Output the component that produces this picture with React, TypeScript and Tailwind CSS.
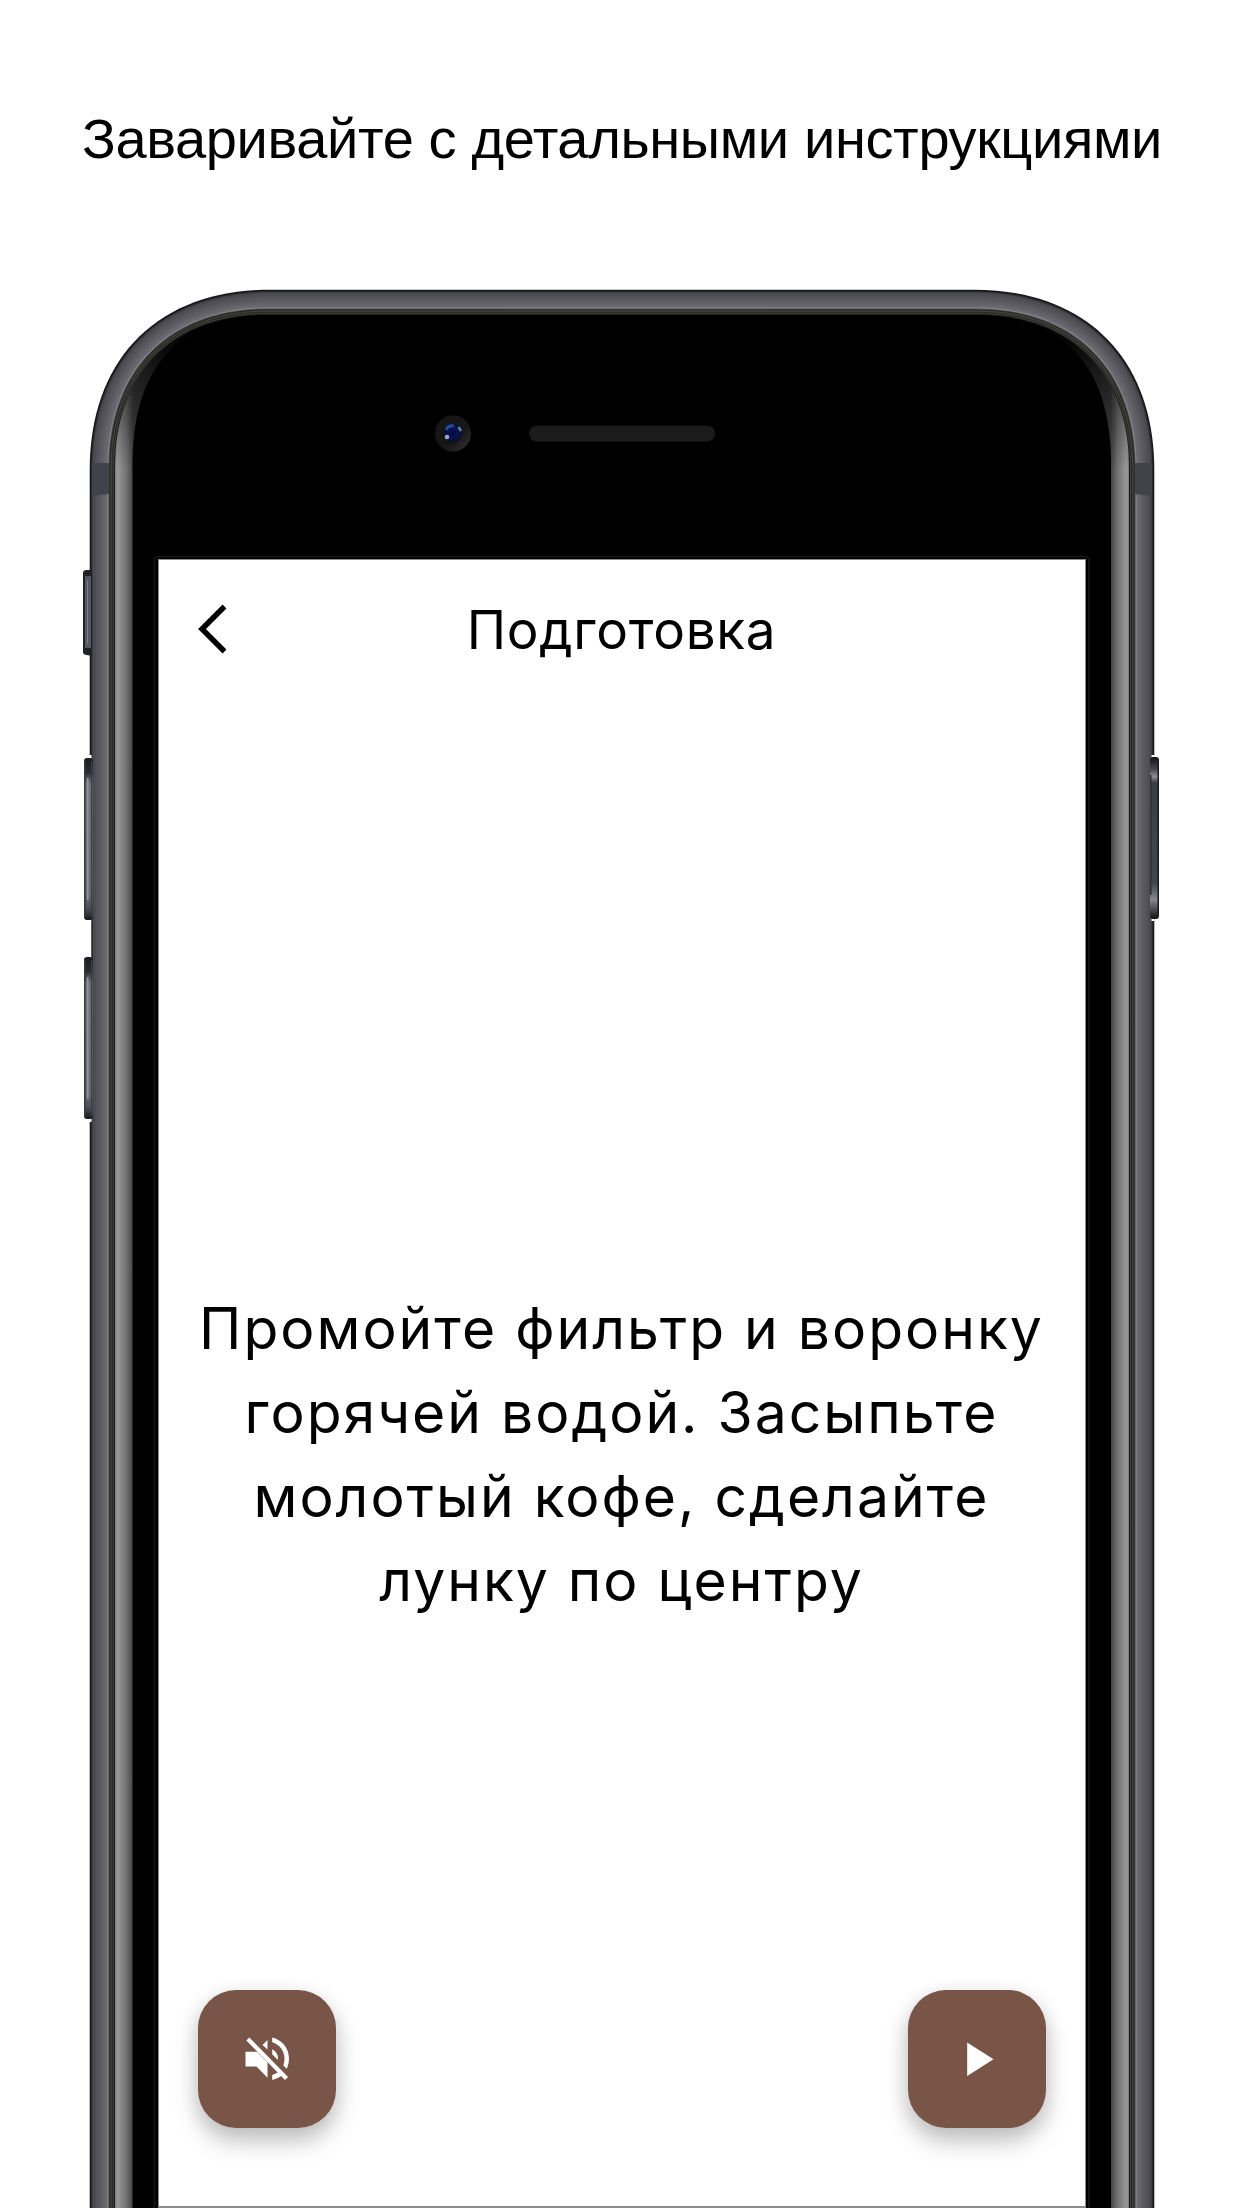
const ramp = (n: number, a: number[], b: number[]) =>
  Array.from({ length: n }, (_, i) => {
    const t = i / (n - 1);
    return `rgb(${a.map((v, j) => Math.round(v + (b[j] - v) * t)).join(",")})`;
  });

/* Rounded, open-bottomed phone outline inset from the body edge. */
function shell(inset: number) {
  const l = 90 + inset;
  const r = 1154 - inset;
  const t = 290 + inset;
  const R = 180 - inset * 1.1;
  const h = R * 0.38;
  return `M${l} 2210V${t + R}C${l} ${t + h} ${l + h} ${t} ${l + R} ${t}H${r - R}C${r - h} ${t} ${r} ${t + h} ${r} ${t + R}V2210Z`;
}

const layers: [number, string][] = [
  [-0.3, "#17191b"],
  [1.4, "#35363b"],
  ...ramp(9, [73, 73, 78], [108, 107, 114]).map((c, i): [number, string] => [2.6 + i * 1.7, c]),
  [17.4, "#85858b"],
  [18.4, "#55565a"],
  [19.2, "#292a26"],
  [20.6, "#43443c"],
  [21.8, "#292a24"],
  [23, "#3f4039"],
  [24, "#1b1b1b"],
];

function Phone() {
  return (
    <svg className="absolute inset-0" width="1242" height="2208" viewBox="0 0 1242 2208" aria-hidden="true">
      <defs>
        <linearGradient id="glass" gradientUnits="userSpaceOnUse" x1="115" x2="1129" y1="0" y2="0">
          <stop offset="0" stopColor="#777" />
          <stop offset=".002" stopColor="#9b9b9b" />
          <stop offset=".011" stopColor="#747474" />
          <stop offset=".018" stopColor="#414141" />
          <stop offset=".06" stopColor="#222" />
          <stop offset=".94" stopColor="#222" />
          <stop offset=".982" stopColor="#414141" />
          <stop offset=".989" stopColor="#747474" />
          <stop offset=".998" stopColor="#9b9b9b" />
          <stop offset="1" stopColor="#777" />
        </linearGradient>
        <linearGradient id="fade" gradientUnits="userSpaceOnUse" x1="0" x2="0" y1="325" y2="470">
          <stop offset="0" stopColor="#000" />
          <stop offset=".3" stopColor="#000" stopOpacity=".55" />
          <stop offset="1" stopColor="#000" stopOpacity="0" />
        </linearGradient>
        <linearGradient id="btn" x1="0" x2="0" y1="0" y2="1">
          <stop offset="0" stopColor="#1b1c21" />
          <stop offset=".09" stopColor="#2b2d33" />
          <stop offset=".16" stopColor="#70737b" />
          <stop offset=".84" stopColor="#686b73" />
          <stop offset=".93" stopColor="#4a4d54" />
          <stop offset="1" stopColor="#15171a" />
        </linearGradient>
        <linearGradient id="btnR" x1="0" x2="0" y1="0" y2="1">
          <stop offset="0" stopColor="#111216" />
          <stop offset=".08" stopColor="#4a4c52" />
          <stop offset=".12" stopColor="#8b8d94" />
          <stop offset=".16" stopColor="#3a3d43" />
          <stop offset=".78" stopColor="#43464c" />
          <stop offset=".88" stopColor="#85878e" />
          <stop offset="1" stopColor="#111216" />
        </linearGradient>
        <radialGradient id="lens">
          <stop offset="0" stopColor="#02083c" />
          <stop offset=".55" stopColor="#071452" />
          <stop offset="1" stopColor="#0c0e1c" />
        </radialGradient>
        <linearGradient id="lensRim" x1="0" y1="0" x2="1" y2="1">
          <stop offset="0" stopColor="#151515" />
          <stop offset=".6" stopColor="#171717" />
          <stop offset="1" stopColor="#343434" />
        </linearGradient>
      </defs>

      {layers.map(([inset, color]) => (
        <path key={inset} d={shell(inset)} fill={color} />
      ))}
      <path d={shell(25)} fill="url(#glass)" />
      <path d={shell(25)} fill="url(#fade)" />
      <path d="M132.5 2210V465C132.5 370 175 315 275 315H969C1069 315 1111 370 1111 465V2210Z" fill="#000" />

      <path d="M92 463H109V494L92 496Z" fill="#404349" />
      <path d="M1135 463H1152V496L1135 494Z" fill="#404349" />

      <path d="M92 570H86.500Q83 570 83 573V652Q83 655 87 655L92 656Z" fill="#202126" />
      <rect x="85" y="576" width="6" height="72" fill="#55585f" />
      <rect x="87" y="580" width="1" height="64" fill="#7b7e84" />
      <rect x="89" y="755" width="2.500" height="167" fill="#fff" />
      <rect x="89" y="918" width="2.500" height="42" fill="#fff" />
      <rect x="89" y="957" width="2.500" height="165" fill="#fff" />
      <rect x="91.500" y="918" width="1" height="42" fill="#1d1e21" />
      {[758, 957].map((y) => (
        <g key={y}>
          <rect x="84" y={y} width="9" height="162" rx="3" fill="url(#btn)" />
          <rect x="84" y={y + 3} width="1.500" height="156" fill="#36383d" />
          <rect x="87" y={y + 20} width="1.500" height="122" fill="#92959c" />
          <rect x="91" y={y + 3} width="1.500" height="156" fill="#3c3e44" />
        </g>
      ))}
      <rect x="1151.500" y="755" width="3" height="166" fill="#fff" />
      <rect x="1150" y="757" width="9" height="162" rx="3" fill="url(#btnR)" />
      <rect x="1157.500" y="760" width="1.500" height="156" fill="#191a1d" />
      <rect x="1150" y="775" width="1.500" height="120" fill="#2d2f34" />

      <circle cx="453" cy="433.500" r="18" fill="url(#lensRim)" />
      <circle cx="453" cy="433" r="9.500" fill="url(#lens)" />
      <path d="M446 430Q448 425 454 426" stroke="#284a9c" strokeWidth="3" fill="none" />
      <circle cx="447" cy="437" r="2.300" fill="#8fa9cc" />
      <path d="M458.500 427L461 431" stroke="#5a86a8" strokeWidth="2.500" />
      <rect x="529" y="425.500" width="186" height="16" rx="8" fill="#1b1b1b" />

      <path d="M154.500 2210V560Q154.500 556.500 158 556.500H1085Q1089 556.500 1089 560V2210" fill="none" stroke="#141414" strokeWidth="2" />
    </svg>
  );
}

const fab =
  "flex size-[138px] items-center justify-center rounded-[38px] bg-[#795548] text-white shadow-[0_14px_24px_rgba(0,0,0,0.21),0_4px_20px_rgba(0,0,0,0.10)]";

export default function App() {
  return (
    <div className="relative flex h-[2208px] w-[1242px] flex-col items-center overflow-hidden bg-white text-black">
      <Phone />
      <h1 className="relative flex h-[559px] w-full justify-center pt-[106px] pl-[2px] font-['Liberation_Sans',sans-serif] text-[56px] leading-[66px] tracking-[-0.36px] whitespace-nowrap">
        Заваривайте с детальными инструкциями
      </h1>
      <main className="relative ml-[1px] flex w-[928px] flex-1 flex-col border border-b-2 border-[#8c8c8c] bg-white font-['Inter',sans-serif]">
        <header className="relative flex h-[138px] items-center justify-center pt-[3px]">
          <button className="absolute top-[44px] left-[38px]" aria-label="Назад">
            <svg width="32" height="50" viewBox="0 0 32 50" fill="none" stroke="#000" strokeWidth="5.500">
              <path d="M27.500 2.500L5 25L27.500 47.500" />
            </svg>
          </button>
          <h2 className="text-[53px] tracking-[0.7px]">Подготовка</h2>
        </header>
        <p className="mt-[589px] text-center text-[57px] leading-[84px] tracking-[2px] whitespace-nowrap">
          Промойте фильтр и воронку
          <br />
          горячей водой. Засыпьте
          <br />
          молотый кофе, сделайте
          <br />
          лунку по центру
        </p>
        <div className="mt-auto mb-[78px] flex justify-between px-[39px]">
          <button className={fab} aria-label="Звук">
            <svg width="48" height="48" viewBox="0 0 48 48" fill="currentColor">
              <path d="M2.500 16.700H14L24.500 27.500V42.700L13.500 31.500H2.500Z" />
              <path d="M19.500 10L24.500 5V14.500Z" />
              <path d="M29.200 14.300Q34.500 17 34.900 22.500V25L29.200 19.300Z" />
              <path d="M29.200 2.500C38.500 4.500 46 13 46 23.500C46 27.500 45 31 43.800 33.800L40.300 30.500C41 28.300 41.500 26 41.500 23.500C41.500 15.500 36.500 9.500 29.200 7.200Z" />
              <path d="M29.200 40Q33 38.800 36 36.600L39.700 40Q35 43.800 29.200 45Z" />
              <path d="M4.800 4L43.500 43.500" stroke="currentColor" strokeWidth="4.200" />
            </svg>
          </button>
          <button className={fab} aria-label="Старт">
            <svg width="48" height="48" viewBox="0 0 48 48" fill="currentColor">
              <path d="M14.200 7.500L40.500 24.200L14.200 41Z" />
            </svg>
          </button>
        </div>
      </main>
    </div>
  );
}
